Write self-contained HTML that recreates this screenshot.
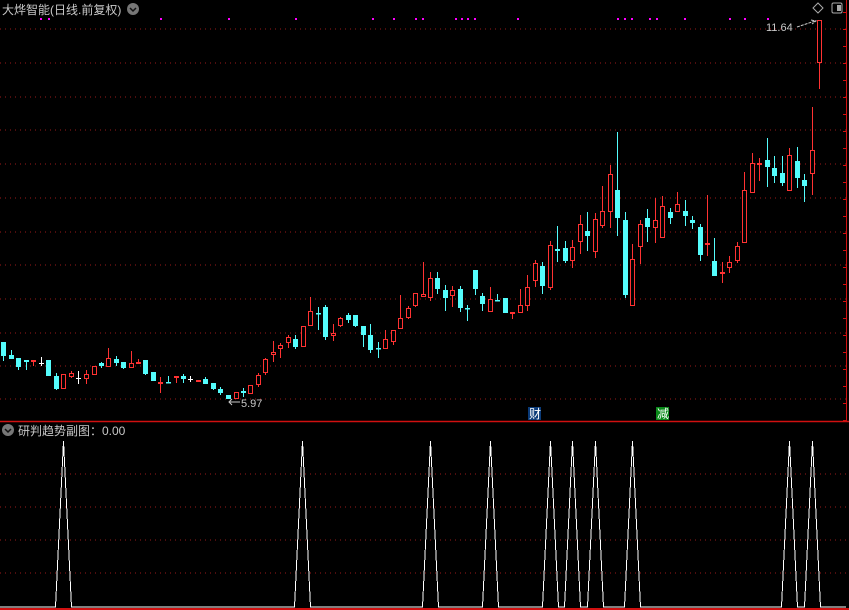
<!DOCTYPE html>
<html><head><meta charset="utf-8"><style>
html,body{margin:0;padding:0;background:#000;width:849px;height:610px;overflow:hidden}
svg{display:block}
text{font-family:"Liberation Sans","Noto Sans CJK SC",sans-serif}
</style></head><body>
<svg id="s" width="849" height="610" xmlns="http://www.w3.org/2000/svg">
<rect width="849" height="610" fill="#000"/>
<g id="grid" stroke="#9a1a1a" stroke-width="1" stroke-dasharray="1,4" shape-rendering="crispEdges"></g>
<line x1="0" y1="421.5" x2="849" y2="421.5" stroke="#d01010" stroke-width="1.5"/>
<line x1="0" y1="609" x2="849" y2="609" stroke="#d01010" stroke-width="2"/>
<line x1="846.5" y1="0" x2="846.5" y2="421" stroke="#d01010"/>
<g id="ticks" stroke="#d01010"></g>
<g id="dots" fill="#ff00ff"></g>
<g id="candles" shape-rendering="crispEdges"></g>
<g id="spikes" fill="none" stroke="#fff" stroke-width="1" shape-rendering="crispEdges"></g>
<text x="2" y="14" font-size="12" fill="#c8c8c8">大烨智能(日线.前复权)</text>
<circle cx="133" cy="9" r="6" fill="#777"/>
<path d="M130 8 L133 11 L136 8" stroke="#111" stroke-width="1.5" fill="none"/>
<path d="M818 3 L823 8 L818 13 L813 8 Z" stroke="#aaa" fill="none"/>
<rect x="832" y="3" width="10" height="10" rx="1.5" stroke="#aaa" fill="none"/>
<rect x="837" y="5" width="4" height="6" fill="#aaa"/>
<text x="766" y="31" font-size="11" fill="#c8c8c8">11.64</text>
<path d="M797 27 L815 21 M811 20 L816 21 L812 24" stroke="#c8c8c8" fill="none" stroke-dasharray="3,1"/>
<text x="241" y="407" font-size="11" fill="#c8c8c8">5.97</text>
<path d="M240 402 L229 402 M232 399 L229 402 L232 405" stroke="#c8c8c8" fill="none"/>
<rect x="528" y="407" width="13" height="13" fill="#0a3a78"/>
<text x="529" y="418" font-size="12" fill="#fff">财</text>
<rect x="656" y="407" width="13" height="13" fill="#0a8a1a"/>
<text x="657" y="418" font-size="12" fill="#fff">减</text>
<circle cx="8" cy="430" r="6" fill="#777"/>
<path d="M5 429 L8 432 L11 429" stroke="#111" stroke-width="1.5" fill="none"/>
<text x="18" y="435" font-size="12" fill="#c8c8c8">研判趋势副图：0.00</text>
</svg>
<script>
var NS="http://www.w3.org/2000/svg";
function el(p,t,a){var e=document.createElementNS(NS,t);for(var k in a)e.setAttribute(k,a[k]);document.getElementById(p).appendChild(e);return e;}
[29,63,97,130,164,198,232,265,299,333,366,399,474,507,540,573].forEach(function(y){el("grid","line",{x1:0,y1:y,x2:846,y2:y});});
for(var y=12;y<421;y+=17)el("ticks","line",{x1:843,y1:y+.5,x2:846,y2:y+.5});
[40,48,160,228,295,372,393,415,422,455,461,467,474,517,617,624,631,649,656,684,729,744,767].forEach(function(x){el("dots","rect",{x:x,y:18,width:2,height:2});});
var C=[
[3,342,356,342,361,'c'],[11,355,359,350,359,'c'],[18,358,367,358,370,'c'],[26,360,362,360,370,'c'],[33,360,362,360,366,'r'],[41,363,364,357,366,'w'],
[48,360,376,360,376,'c'],[56,376,389,373,390,'c'],[63,374,389,374,389,'r'],[71,373,377,371,378,'r'],[78,378,379,371,384,'w'],[86,374,379,370,384,'r'],
[94,366,375,366,375,'r'],[101,363,366,362,368,'c'],[108,358,367,348,367,'r'],[116,359,363,356,366,'c'],[123,362,368,362,369,'c'],[131,363,368,351,368,'r'],
[138,362,364,359,364,'r'],[145,360,374,360,375,'c'],[153,372,381,372,381,'c'],[160,382,384,377,393,'r'],[168,382,383,376,383,'c'],[176,376,378,376,383,'r'],
[183,376,379,374,383,'c'],[190,379,380,376,382,'w'],[198,380,382,380,382,'r'],[205,379,384,377,384,'c'],[213,383,389,383,390,'c'],[220,389,393,387,395,'c'],
[228,395,399,395,399,'c'],[236,392,399,392,399,'r'],[243,391,393,388,397,'c'],[250,385,394,385,394,'r'],[258,375,385,373,387,'r'],[265,359,373,358,375,'r'],
[273,352,355,341,362,'r'],[280,345,349,343,358,'r'],[288,337,343,335,348,'r'],[295,339,347,335,349,'c'],[303,326,347,326,347,'r'],[310,311,326,297,326,'r'],
[318,313,314,307,330,'c'],[325,307,337,305,340,'c'],[333,333,336,324,341,'r'],[340,318,326,317,327,'r'],[348,315,320,313,323,'c'],[355,315,326,315,327,'c'],
[363,326,335,326,347,'c'],[370,335,350,324,353,'c'],[378,348,349,342,358,'c'],[385,339,349,330,349,'r'],[393,330,342,330,345,'r'],[400,318,329,295,329,'r'],
[408,308,318,306,319,'r'],[415,293,306,293,307,'r'],[423,294,297,262,297,'r'],[430,278,298,272,301,'r'],[437,278,289,272,294,'c'],[445,290,298,285,311,'c'],
[452,290,296,286,307,'r'],[460,289,308,286,312,'c'],[467,308,309,305,321,'c'],[475,270,289,270,295,'c'],[482,296,304,293,311,'c'],[490,299,312,287,312,'r'],
[497,300,301,294,301,'c'],[505,298,313,298,313,'c'],[512,312,314,312,319,'r'],[520,305,313,289,313,'r'],[527,287,306,275,311,'r'],[535,263,281,260,287,'r'],
[542,266,286,262,294,'c'],[550,245,288,241,290,'r'],[557,249,251,226,262,'c'],[565,248,261,241,263,'c'],[572,247,261,240,268,'r'],[580,224,242,215,254,'r'],
[587,231,236,212,251,'c'],[595,219,252,213,258,'r'],[602,211,226,186,228,'r'],[610,174,212,165,228,'r'],[617,190,218,132,236,'c'],[625,220,295,212,298,'c'],
[632,259,306,244,306,'r'],[640,224,247,220,264,'r'],[647,218,227,209,242,'c'],[655,220,228,198,243,'r'],[662,206,238,196,238,'r'],[670,212,218,208,224,'c'],
[677,204,212,192,212,'r'],[685,211,216,200,226,'c'],[692,220,223,216,229,'c'],[700,227,255,224,261,'c'],[707,243,245,195,256,'r'],[714,261,276,238,276,'c'],
[722,272,274,262,283,'r'],[729,262,268,256,273,'r'],[737,246,261,242,263,'r'],[744,190,243,172,243,'r'],[752,163,193,153,193,'r'],[759,163,165,158,181,'r'],
[767,160,167,138,187,'c'],[774,168,176,156,183,'c'],[782,173,183,156,186,'c'],[789,155,191,148,191,'r'],[797,161,178,147,188,'c'],[804,180,186,174,202,'c'],
[812,150,174,107,195,'r'],[819,20,63,20,89,'r']];
C.forEach(function(d){var x=d[0],col=d[5]=='c'?'#54fcfc':d[5]=='r'?'#ff3232':'#ffffff';
 el("candles","line",{x1:x+.5,y1:d[3],x2:x+.5,y2:d[4],stroke:col});
 var h=d[2]-d[1];
 if(d[5]=='c')el("candles","rect",{x:x-2,y:d[1],width:5,height:Math.max(h,1.5),fill:col});
 else if(d[5]=='r'){ if(h<=2)el("candles","rect",{x:x-2,y:d[1],width:5,height:2,fill:col});
   else el("candles","rect",{x:x-1.5,y:d[1]+.5,width:4,height:h-1,fill:"#000",stroke:col});}
 else el("candles","rect",{x:x-2,y:d[1],width:5,height:1,fill:col});
});
var S=[63,302,430,490,550,572,595,632,789,812],p="M0 607";
S.forEach(function(x){p+=" L"+(x-7.5)+" 607 L"+(x+.5)+" 441 L"+(x+8.5)+" 607";});
p+=" L846 607";
el("spikes","path",{d:p});
</script>
</body></html>
